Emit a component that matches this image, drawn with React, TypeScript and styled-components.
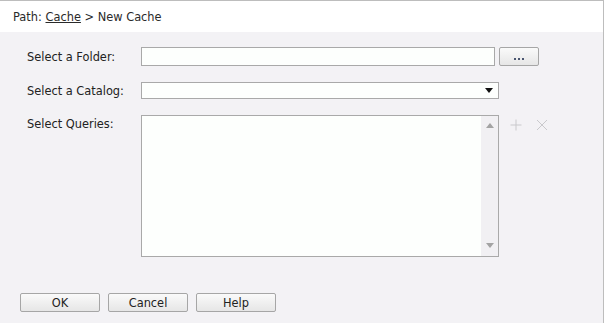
import styled, { createGlobalStyle } from "styled-components"

const GlobalStyle = createGlobalStyle`
    html, body {
        margin: 0;
        padding: 0;
        background: #ffffff;
    }
    body {
        font-family: "DejaVu Sans", Verdana, sans-serif;
        font-size: 11.4px;
        color: #222;
    }
`

const Frame = styled.div`
    position: relative;
    width: 604px;
    height: 323px;
    box-sizing: border-box;
    border-top: 1px solid #bdbdbd;
    border-right: 1px solid #bdbdbd;
    display: flex;
    flex-direction: column;
    overflow: hidden;
`

const TabMark = styled.div`
    position: absolute;
    top: -1px;
    left: 442px;
    width: 44px;
    height: 1px;
    background: #333;
`

const Header = styled.div`
    height: 31px;
    background: #fff;
    padding-left: 13px;
    display: flex;
    align-items: center;
    color: #2a2a2a;
`

const PathLink = styled.a`
    color: #2a2a2a;
    text-decoration: underline;
    cursor: pointer;
`

const Body = styled.div`
    flex: 1;
    background: #f3f2f5;
    padding: 15px 0 0 0;
    display: flex;
    flex-direction: column;
`

const Form = styled.div`
    display: grid;
    grid-template-columns: 114px auto;
    row-gap: 16px;
    padding-left: 27px;
`

const Label = styled.div<{ $top?: boolean }>`
    display: flex;
    align-items: ${p => (p.$top ? "flex-start" : "center")};
    padding-top: ${p => (p.$top ? "2px" : "0")};
    color: #222;
`

const Controls = styled.div`
    display: flex;
    align-items: flex-start;
`

const TextInput = styled.input`
    width: 354px;
    height: 19px;
    box-sizing: border-box;
    border: 1px solid #a9a9a9;
    background: #fdfffd;
    padding: 0 3px;
    font: inherit;
    outline: none;
`

const Button = styled.button<{ $w: number }>`
    width: ${p => p.$w}px;
    height: 19px;
    box-sizing: border-box;
    border: 1px solid #a6a6a6;
    border-radius: 2px;
    background: linear-gradient(#fafafa, #e6e6e6);
    font: inherit;
    color: #222;
    padding: 0;
    display: flex;
    align-items: center;
    justify-content: center;
    cursor: pointer;
`

const BrowseButton = styled(Button)`
    margin-left: 4px;
    align-items: flex-end;
    gap: 2px;
    padding-bottom: 5px;
`

const Dot = styled.span`
    width: 2px;
    height: 2px;
    background: #4a5670;
`

const SelectBox = styled.div`
    width: 358px;
    height: 17px;
    box-sizing: border-box;
    border: 1px solid #a9a9a9;
    background: #fdfffd;
    display: flex;
    align-items: center;
    justify-content: flex-end;
    padding-right: 5px;
`

const ListBox = styled.div`
    width: 358px;
    height: 142px;
    box-sizing: border-box;
    border: 1px solid #a9a9a9;
    background: #fdfffd;
    display: flex;
    justify-content: flex-end;
`

const ScrollBar = styled.div`
    width: 17px;
    background: #f1f0f3;
    display: flex;
    flex-direction: column;
    justify-content: space-between;
    align-items: center;
    padding: 7px 0 7px;
`

const IconRow = styled.div`
    display: flex;
    gap: 14px;
    margin-left: 11px;
    margin-top: 4px;
`

const Footer = styled.div`
    margin-top: auto;
    margin-bottom: 11px;
    padding-left: 20px;
    display: flex;
    gap: 8px;
`

const Arrow = ({ up, color }: { up?: boolean; color: string }) => (
    <svg width="8" height="6" viewBox="0 0 8 6">
        <polygon points={up ? "0,5 8,5 4,0" : "0,0 8,0 4,5"} fill={color} />
    </svg>
)

const App: React.FC = () => {
    return (
        <>
            <GlobalStyle />
            <Frame>
                <TabMark />
                <Header>
                    Path:&nbsp;<PathLink>Cache</PathLink>&nbsp;&gt; New Cache
                </Header>
                <Body>
                    <Form>
                        <Label>Select a Folder:</Label>
                        <Controls>
                            <TextInput />
                            <BrowseButton $w={40} aria-label="...">
                                <Dot />
                                <Dot />
                                <Dot />
                            </BrowseButton>
                        </Controls>
                        <Label>Select a Catalog:</Label>
                        <Controls>
                            <SelectBox>
                                <Arrow color="#111" />
                            </SelectBox>
                        </Controls>
                        <Label $top>Select Queries:</Label>
                        <Controls>
                            <ListBox>
                                <ScrollBar>
                                    <Arrow up color="#a3a3a3" />
                                    <Arrow color="#a3a3a3" />
                                </ScrollBar>
                            </ListBox>
                            <IconRow>
                                <svg width="12" height="12" viewBox="0 0 12 12">
                                    <path d="M6 0.5V11.5M0.5 6H11.5" stroke="#c9c9cc" strokeWidth="1" fill="none" />
                                </svg>
                                <svg width="12" height="12" viewBox="0 0 12 12">
                                    <path d="M1 1L11 11M11 1L1 11" stroke="#c9c9cc" strokeWidth="1" fill="none" />
                                </svg>
                            </IconRow>
                        </Controls>
                    </Form>
                    <Footer>
                        <Button $w={80}>OK</Button>
                        <Button $w={80}>Cancel</Button>
                        <Button $w={80}>Help</Button>
                    </Footer>
                </Body>
            </Frame>
        </>
    )
}

export default App
